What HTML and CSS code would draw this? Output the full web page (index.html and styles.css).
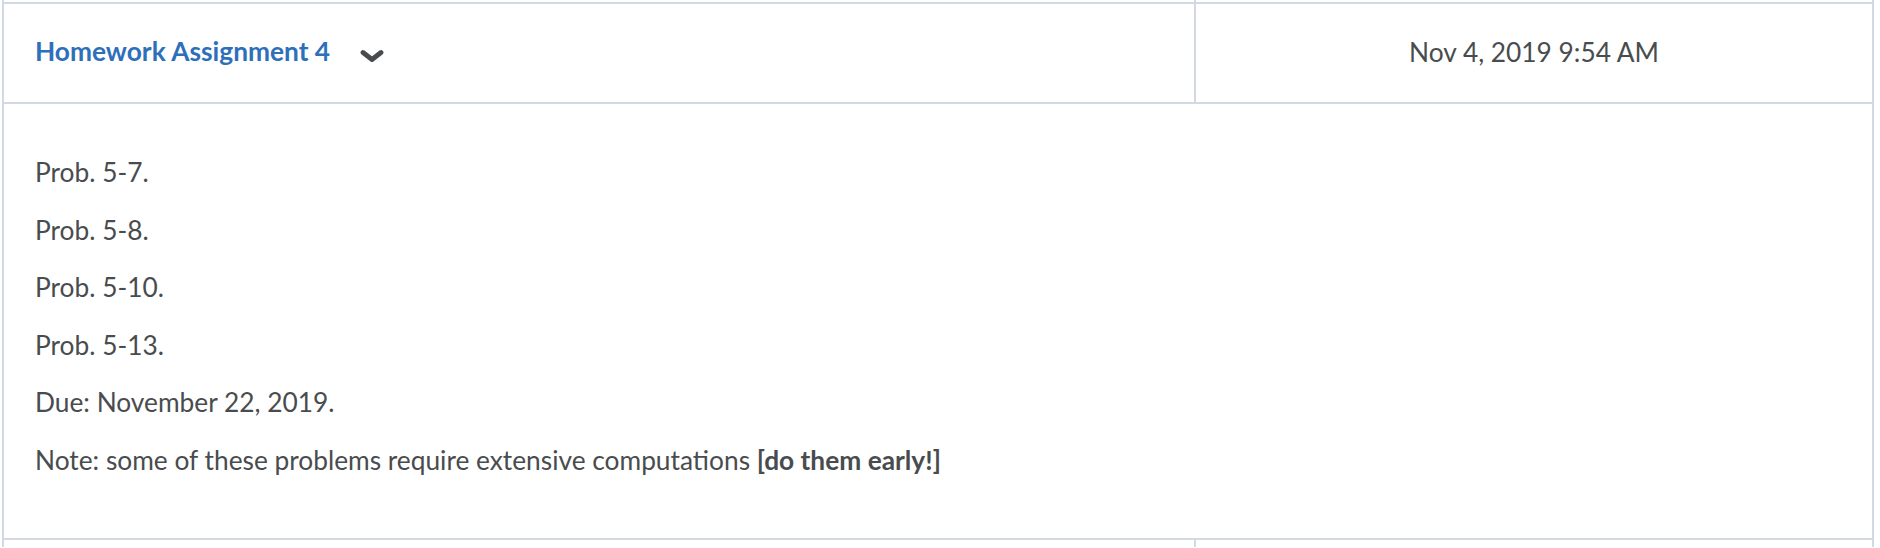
FILE: index.html
```html
<!DOCTYPE html>
<html>
<head>
<meta charset="utf-8">
<link rel="stylesheet" href="styles.css">
</head>
<body>
<div class="table">
  <div class="row stub-top">
    <div class="cell cell-left"></div>
    <div class="cell"></div>
  </div>
  <div class="row header">
    <div class="cell cell-left title-cell">
      <a class="title" href="#">Homework Assignment 4</a>
      <svg class="chevron" width="24" height="14" viewBox="0 0 24 14" aria-hidden="true">
        <polyline points="3,3.5 12,10.5 21,3.5" fill="none" stroke="#494c4e" stroke-width="4.8" stroke-linecap="round" stroke-linejoin="round"/>
      </svg>
    </div>
    <div class="cell date-cell">Nov 4, 2019 9:54 AM</div>
  </div>
  <div class="body-row">
    <p>Prob. 5-7.</p>
    <p>Prob. 5-8.</p>
    <p>Prob. 5-10.</p>
    <p>Prob. 5-13.</p>
    <p>Due: November 22, 2019.</p>
    <p>Note: some of these problems require extensive computations <strong>[do them early!]</strong></p>
  </div>
  <div class="row stub-bottom">
    <div class="cell cell-left"></div>
    <div class="cell"></div>
  </div>
</div>
</body>
</html>
```
FILE: styles.css
```css
html, body {
  margin: 0;
  padding: 0;
  background: #ffffff;
}

body {
  font-family: Lato, "Open Sans", sans-serif;
  color: #494c4e;
}

.table {
  margin-left: 2px;
  width: 1872px;
  box-sizing: border-box;
  border-left: 2px solid #d3d9e3;
  border-right: 2px solid #d3d9e3;
}

.row {
  display: grid;
  grid-template-columns: 1192px 1fr;
}

.cell-left {
  border-right: 2px solid #d3d9e3;
}

.stub-top {
  height: 2px;
}

.stub-bottom {
  height: 7px;
}

.header {
  border-top: 2px solid #d3d9e3;
  border-bottom: 2px solid #d3d9e3;
  height: 98px;
}

.title-cell {
  display: flex;
  align-items: center;
  padding-left: 31px;
  padding-bottom: 4px;
  box-sizing: border-box;
  gap: 30px;
}

.title {
  font-size: 26.3px;
  font-weight: 700;
  color: #2d70b9;
  text-decoration: none;
}

.chevron {
  margin-top: 9px;
  display: block;
}

.date-cell {
  display: flex;
  align-items: center;
  justify-content: center;
  padding-bottom: 2px;
  box-sizing: border-box;
  font-size: 26.3px;
}

.body-row {
  height: 436px;
  box-sizing: border-box;
  border-bottom: 2px solid #d3d9e3;
  padding: 52px 0 0 31px;
  font-size: 26.3px;
  line-height: 33.6px;
}

.body-row p {
  margin: 0 0 24px 0;
}

.body-row strong {
  font-weight: 700;
}
```
